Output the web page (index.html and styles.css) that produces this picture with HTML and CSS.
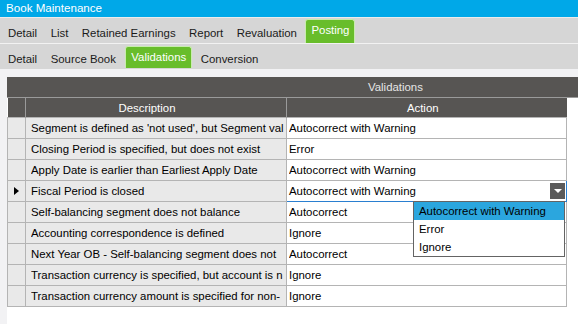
FILE: index.html
```html
<!DOCTYPE html>
<html lang="en">

<head>
    <meta charset="UTF-8">
    <meta name="viewport" content="width=device-width, initial-scale=1.0">
    <title>Book Maintenance</title>
    <link rel="stylesheet" href="styles.css">
</head>

<body>
    <div class="titlebar">Book Maintenance</div>

    <div class="tabs tabs-main">
        <span class="tab">Detail</span>
        <span class="tab">List</span>
        <span class="tab">Retained Earnings</span>
        <span class="tab">Report</span>
        <span class="tab">Revaluation</span>
        <span class="tab active">Posting</span>
    </div>

    <div class="tabs tabs-sub">
        <span class="tab">Detail</span>
        <span class="tab">Source Book</span>
        <span class="tab active">Validations</span>
        <span class="tab">Conversion</span>
    </div>

    <div class="content">
        <div class="grid">
            <div class="band">Validations</div>
            <table class="rules">
                <colgroup>
                    <col class="col-ind">
                    <col class="col-desc">
                    <col class="col-act">
                </colgroup>
                <thead>
                    <tr>
                        <th></th>
                        <th class="h-desc">Description</th>
                        <th class="h-act">Action</th>
                    </tr>
                </thead>
                <tbody>
                    <tr>
                        <td class="ind"></td>
                        <td class="desc"><div class="cell">Segment is defined as 'not used', but Segment val</div></td>
                        <td class="act"><div class="cell">Autocorrect with Warning</div></td>
                    </tr>
                    <tr>
                        <td class="ind"></td>
                        <td class="desc"><div class="cell">Closing Period is specified, but does not exist</div></td>
                        <td class="act"><div class="cell">Error</div></td>
                    </tr>
                    <tr>
                        <td class="ind"></td>
                        <td class="desc"><div class="cell">Apply Date is earlier than Earliest Apply Date</div></td>
                        <td class="act"><div class="cell">Autocorrect with Warning</div></td>
                    </tr>
                    <tr class="current">
                        <td class="ind"><span class="pointer"></span></td>
                        <td class="desc"><div class="cell">Fiscal Period is closed</div></td>
                        <td class="act editing">
                            <div class="combo">
                                <span>Autocorrect with Warning</span>
                                <span class="combo-btn"></span>
                            </div>
                            <ul class="dropdown">
                                <li class="selected">Autocorrect with Warning</li>
                                <li>Error</li>
                                <li>Ignore</li>
                            </ul>
                        </td>
                    </tr>
                    <tr>
                        <td class="ind"></td>
                        <td class="desc"><div class="cell">Self-balancing segment does not balance</div></td>
                        <td class="act"><div class="cell">Autocorrect</div></td>
                    </tr>
                    <tr>
                        <td class="ind"></td>
                        <td class="desc"><div class="cell">Accounting correspondence is defined</div></td>
                        <td class="act"><div class="cell">Ignore</div></td>
                    </tr>
                    <tr>
                        <td class="ind"></td>
                        <td class="desc"><div class="cell">Next Year OB - Self-balancing segment does not</div></td>
                        <td class="act"><div class="cell">Autocorrect</div></td>
                    </tr>
                    <tr>
                        <td class="ind"></td>
                        <td class="desc"><div class="cell">Transaction currency is specified, but account is n</div></td>
                        <td class="act"><div class="cell">Ignore</div></td>
                    </tr>
                    <tr>
                        <td class="ind"></td>
                        <td class="desc"><div class="cell">Transaction currency amount is specified for non-</div></td>
                        <td class="act"><div class="cell">Ignore</div></td>
                    </tr>
                </tbody>
            </table>
        </div>
    </div>
</body>

</html>
```

FILE: styles.css
```css
body {
    margin: 0;
    font-family: "Liberation Sans", Arial, sans-serif;
    font-size: 11.4px;
    color: #000000;
    background-color: #f2f2f4;
    height: 324px;
    overflow: hidden;
}

.titlebar {
    height: 17px;
    line-height: 16px;
    padding-left: 6px;
    background-color: #00a8e8;
    color: #ffffff;
    font-size: 11.6px;
    border-bottom: 1px solid #ececec;
}

.tabs {
    display: flex;
    align-items: flex-end;
    height: 25px;
    padding-left: 8px;
    gap: 13.5px;
    background-color: #d6d6d6;
}

.tabs-main {
    border-bottom: 1px solid #f2f2f2;
}

.tab {
    line-height: 20px;
    color: #1a1a1a;
    white-space: nowrap;
}

.tab.active {
    line-height: 20px;
    height: 23px;
    padding: 0 5px;
    margin: 0 -6px 0 -5px;
    background-color: #68bd2b;
    color: #ffffff;
    border: 1px solid #c8ecae;
    border-bottom: none;
    border-radius: 3px 3px 0 0;
}

.tabs-sub .tab.active {
    height: 21px;
    line-height: 20px;
    margin-bottom: 1px;
    margin-left: -4px;
    margin-right: -5px;
}

.content {
    padding: 8px 0 0 7px;
}

.grid {
    background-color: #ffffff;
    height: 247px;
}

.band {
    height: 20px;
    line-height: 20px;
    padding-left: 361px;
    background-color: #575553;
    color: #e6e6e6;
    border-bottom: 1px solid #9a9a9a;
}

.rules {
    border-collapse: collapse;
    table-layout: fixed;
    width: 559px;
}

.col-ind {
    width: 18px;
}

.col-desc {
    width: 261px;
}

.col-act {
    width: 280px;
}

.rules th {
    height: 19px;
    padding: 0;
    font-weight: normal;
    background-color: #575553;
    color: #ffffff;
    border-left: 1px solid #9a9a9a;
}

.rules th:first-child {
    border-left: none;
}

.rules th.h-desc {
    padding-right: 18px;
}

.rules th.h-act {
    padding-right: 8px;
}

.rules td {
    height: 20px;
    padding: 0;
    border: 1px solid #b4b4b4;
}

.cell {
    white-space: nowrap;
    overflow: hidden;
}

.rules td.ind,
.rules td.desc {
    background-color: #e9e9e9;
}

.rules td.desc {
    padding-left: 5px;
}

.rules td.act {
    padding-left: 2px;
    background-color: #ffffff;
}

.pointer {
    display: block;
    width: 0;
    height: 0;
    margin-left: 6px;
    border-top: 4px solid transparent;
    border-bottom: 4px solid transparent;
    border-left: 5px solid #000000;
}

.rules td.editing {
    position: relative;
    padding: 0;
    border: 1px solid #2a7fd0;
}

.combo {
    display: flex;
    align-items: center;
    justify-content: space-between;
    padding: 0 1px 0 2px;
}

.combo-btn {
    width: 15px;
    height: 16px;
    background-color: #5a5a5a;
    position: relative;
}

.combo-btn::after {
    content: "";
    position: absolute;
    left: 4px;
    top: 6px;
    border-left: 4px solid transparent;
    border-right: 4px solid transparent;
    border-top: 4px solid #ffffff;
}

.dropdown {
    position: absolute;
    top: 20px;
    left: 126px;
    width: 150px;
    margin: 0;
    padding: 0;
    list-style: none;
    background-color: #ffffff;
    border: 1px solid #646464;
    z-index: 2;
}

.dropdown li {
    height: 18px;
    line-height: 18px;
    padding-left: 5px;
}

.dropdown li.selected {
    background-color: #2ba6de;
}
```
